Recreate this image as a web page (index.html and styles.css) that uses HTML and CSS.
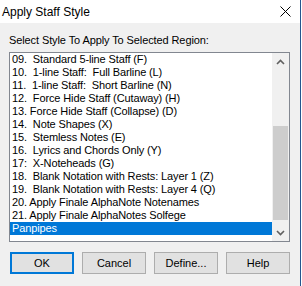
FILE: index.html
```html
<!DOCTYPE html>
<html>
	<head>
		<meta name="viewport" content="width=device-width, initial-scale=1.0">
		<title>Apply Staff Style</title>
		<link rel="stylesheet" href="styles.css">
	</head>
	<body>
	<div class="dialog">
		<div class="title_bar">
			<span class="title_text">Apply Staff Style</span>
			<svg class="close_icon" width="11" height="11" viewBox="0 0 11 11">
				<path d="M0.5 0.5 L10.5 10.5 M10.5 0.5 L0.5 10.5" stroke="#000" stroke-width="1" fill="none"/>
			</svg>
		</div>

		<div class="dialog_body">
			<div class="prompt">Select Style To Apply To Selected Region:</div>

			<div class="style_list">
				<div class="list_items">
					<div class="list_row">09.  Standard 5-line Staff (F)</div>
					<div class="list_row">10.  1-line Staff:  Full Barline (L)</div>
					<div class="list_row">11.  1-line Staff:  Short Barline (N)</div>
					<div class="list_row">12.  Force Hide Staff (Cutaway) (H)</div>
					<div class="list_row">13. Force Hide Staff (Collapse) (D)</div>
					<div class="list_row">14.  Note Shapes (X)</div>
					<div class="list_row">15.  Stemless Notes (E)</div>
					<div class="list_row">16.  Lyrics and Chords Only (Y)</div>
					<div class="list_row">17:  X-Noteheads (G)</div>
					<div class="list_row">18.  Blank Notation with Rests: Layer 1 (Z)</div>
					<div class="list_row">19.  Blank Notation with Rests: Layer 4 (Q)</div>
					<div class="list_row">20. Apply Finale AlphaNote Notenames</div>
					<div class="list_row">21. Apply Finale AlphaNotes Solfege</div>
					<div class="list_row selected">Panpipes</div>
				</div>
				<div class="scroll_bar">
					<div class="scroll_arrow">
						<svg width="9" height="6" viewBox="0 0 9 6"><path d="M1 5 L4.5 1.5 L8 5" stroke="#606060" stroke-width="1.6" fill="none"/></svg>
					</div>
					<div class="scroll_track">
						<div class="scroll_thumb"></div>
					</div>
					<div class="scroll_arrow">
						<svg width="9" height="6" viewBox="0 0 9 6"><path d="M1 1 L4.5 4.5 L8 1" stroke="#606060" stroke-width="1.6" fill="none"/></svg>
					</div>
				</div>
			</div>

			<div class="button_row">
				<button type="button" class="dlg_button default_button">OK</button>
				<button type="button" class="dlg_button">Cancel</button>
				<button type="button" class="dlg_button">Define...</button>
				<button type="button" class="dlg_button">Help</button>
			</div>
		</div>
	</div>
	</body>
</html>
```
FILE: styles.css
```css
	body
	{
		margin: 0;
		background: #ffffff;
		font-family: 'Liberation Sans', Arial, sans-serif;
	}
	.dialog
	{
		width: 300px;
		height: 286px;
		background: #f0f0f0;
		border-right: 1px solid #24568f;
	}
	.title_bar
	{
		height: 23px;
		background: #ffffff;
		display: flex;
		align-items: center;
		justify-content: space-between;
		padding: 0 9px 0 2px;
	}
	.title_text
	{
		font-size: 12px;
		color: #000000;
	}
	.dialog_body
	{
		padding: 10px 10px 0 9px;
	}
	.prompt
	{
		font-size: 11px;
		letter-spacing: -0.1px;
		line-height: 15px;
		height: 19px;
		color: #000000;
	}
	.style_list
	{
		display: flex;
		height: 188px;
		border: 1px solid #828790;
		background: #ffffff;
	}
	.list_items
	{
		flex: 1;
		font-size: 11px;
		letter-spacing: -0.12px;
		color: #000000;
	}
	.list_row
	{
		height: 13px;
		line-height: 13px;
		padding-left: 2px;
		white-space: pre;
	}
	.list_row.selected
	{
		background: #0078d7;
		color: #ffffff;
	}
	.scroll_bar
	{
		width: 17px;
		display: flex;
		flex-direction: column;
		background: #f0f0f0;
	}
	.scroll_arrow
	{
		height: 17px;
		display: flex;
		align-items: center;
		justify-content: center;
	}
	.scroll_track
	{
		flex: 1;
		display: flex;
		flex-direction: column;
		justify-content: flex-end;
	}
	.scroll_thumb
	{
		height: 94px;
		margin: 0 1px 4px 1px;
		background: #cdcdcd;
	}
	.button_row
	{
		display: flex;
		gap: 8px;
		margin-top: 10px;
		padding-left: 1px;
	}
	.dlg_button
	{
		width: 64px;
		height: 22px;
		padding: 0;
		background: #e1e1e1;
		border: 1px solid #adadad;
		font-family: 'Liberation Sans', Arial, sans-serif;
		font-size: 11px;
		color: #000000;
	}
	.default_button
	{
		border: 2px solid #0078d7;
	}
```
